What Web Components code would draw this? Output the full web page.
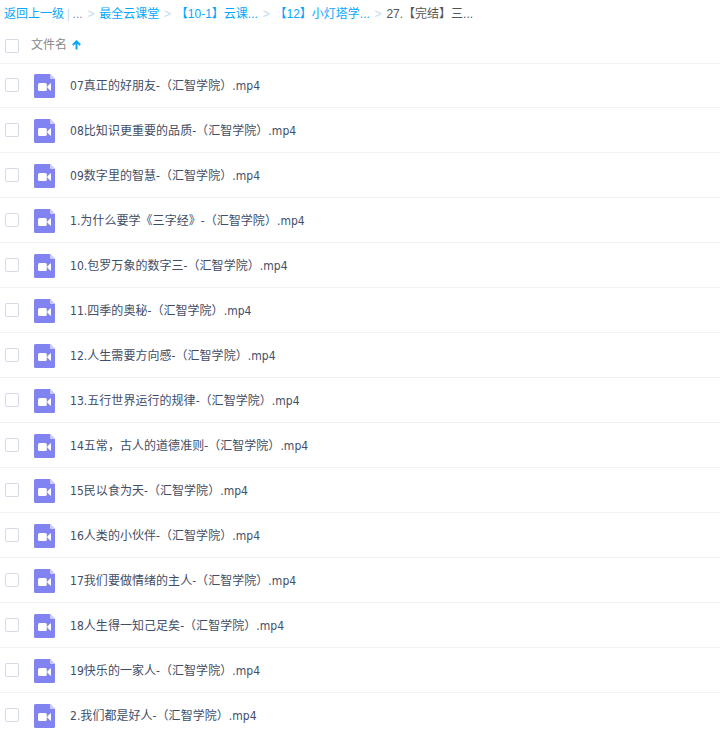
<!DOCTYPE html>
<html lang="zh-CN">
<head>
<meta charset="utf-8">
<title>文件列表</title>
<style>
  body {
    margin: 0;
    height: 733px;
    overflow: hidden;
    background: #fff;
    color: #424e67;
    font: 12px/20px "Liberation Sans", "Noto Sans CJK SC", sans-serif;
  }
</style>
</head>
<body>
<file-browser></file-browser>

<script>
const define = (name, html, setup) => {
  const template = document.createElement("template");
  template.innerHTML = html;

  customElements.define(name, class extends HTMLElement {
    constructor() {
      super();
      this.attachShadow({ mode: "open" });
      this.shadowRoot.appendChild(template.content.cloneNode(true));
    }

    connectedCallback() {
      if (setup) setup(this, this.shadowRoot);
    }
  });
};

define("check-box", /*html*/ `
  <style>
    :host {
      display: block;
      flex: none;
      box-sizing: border-box;
      width: 14px;
      height: 14px;
      border: 1px solid #d4dae6;
      border-radius: 2px;
      background: #fff;
    }
  </style>
`);

define("video-icon", /*html*/ `
  <style>
    :host { display: block; flex: none; width: 21px; height: 24px; }
    svg { display: block; }
  </style>
  <svg width="21" height="24" viewBox="0 0 21 24">
    <path fill="#8183f1" d="M1.5 0H16l5 5v17.5a1.5 1.5 0 0 1-1.5 1.5h-18A1.5 1.5 0 0 1 0 22.500v-21A1.500 1.500 0 0 1 1.500 0z"/>
    <path fill="#cdcdf9" d="M16 0l5 5h-4a1 1 0 0 1-1-1z"/>
    <rect x="4" y="9" width="8.800" height="8" rx="1.500" fill="#fff"/>
    <path fill="#fff" d="M13.400 12.200L16.200 9.400Q17 8.800 17 9.700v6.600q0 .9-.8.3L13.400 13.800z"/>
  </svg>
`);

// One step of the path; the separator follows every step but the last
define("crumb-item", /*html*/ `
  <style>
    :host { display: flex; flex: none; color: #06a7ff; white-space: nowrap; }
    :host([plain]) { color: #818999; }
    :host([current]) { color: #555; }
    i { width: 16.6px; color: #c4d8f4; font-style: normal; text-align: center; }
    :host([current]) i { display: none; }
  </style>
  <slot></slot><i>&gt;</i>
`);

define("crumb-bar", /*html*/ `
  <style>
    :host { display: flex; box-sizing: border-box; height: 27px; padding: 4px 4px 0; }
    .back { color: #06a7ff; }
    .rule { width: 8.600px; color: #c4d8f4; text-align: center; }
  </style>
  <span class="back">返回上一级</span>
  <span class="rule">|</span>
  <slot></slot>
`);

define("list-header", /*html*/ `
  <style>
    :host {
      display: flex;
      align-items: center;
      box-sizing: border-box;
      height: 37px;
      padding: 0 5px 0;
      border-bottom: 1px solid #f1f2f8;
      color: #888;
    }
    check-box { margin-top: 2px; }
    span { margin: 0 5px 0 12px; }
    svg { display: block; }
  </style>
  <check-box></check-box>
  <span><slot></slot></span>
  <svg width="9" height="10" viewBox="0 0 9 10" fill="none" stroke="#06a7ff" stroke-width="2">
    <path d="M4.500 9.500V1.500M.8 5L4.500 1.400l3.700 3.600"/>
  </svg>
`);

define("file-row", /*html*/ `
  <style>
    :host {
      display: flex;
      align-items: center;
      box-sizing: border-box;
      height: 45px;
      padding: 0 5px;
      border-bottom: 1px solid #f1f2f8;
    }
    video-icon { margin: 2px 15px 0; }
    span {
      margin-top: 2px;
      font-family: "DejaVu Sans Condensed", "Noto Sans CJK SC", sans-serif;
      letter-spacing: .04px;
      white-space: nowrap;
    }
  </style>
  <check-box></check-box>
  <video-icon></video-icon>
  <span><slot></slot></span>
`);

const files = [
  "07真正的好朋友",
  "08比知识更重要的品质",
  "09数字里的智慧",
  "1.为什么要学《三字经》",
  "10.包罗万象的数字三",
  "11.四季的奥秘",
  "12.人生需要方向感",
  "13.五行世界运行的规律",
  "14五常，古人的道德准则",
  "15民以食为天",
  "16人类的小伙伴",
  "17我们要做情绪的主人",
  "18人生得一知己足矣",
  "19快乐的一家人",
  "2.我们都是好人",
];

define("file-browser", /*html*/ `
  <style>
    :host { display: block; }
    /* the first row shares its top edge with the header's line */
    .rows { margin-top: -1px; }
  </style>
  <crumb-bar>
    <crumb-item plain>...</crumb-item>
    <crumb-item>最全云课堂</crumb-item>
    <crumb-item>【10-1】云课...</crumb-item>
    <crumb-item>【12】小灯塔学...</crumb-item>
    <crumb-item current>27.【完结】三...</crumb-item>
  </crumb-bar>
  <list-header>文件名</list-header>
  <div class="rows"></div>
`, (host, root) => {
  root.querySelector(".rows").append(...files.map((name) => {
    const row = document.createElement("file-row");
    row.textContent = `${name}-（汇智学院）.mp4`;
    return row;
  }));
});
</script>
</body>
</html>
